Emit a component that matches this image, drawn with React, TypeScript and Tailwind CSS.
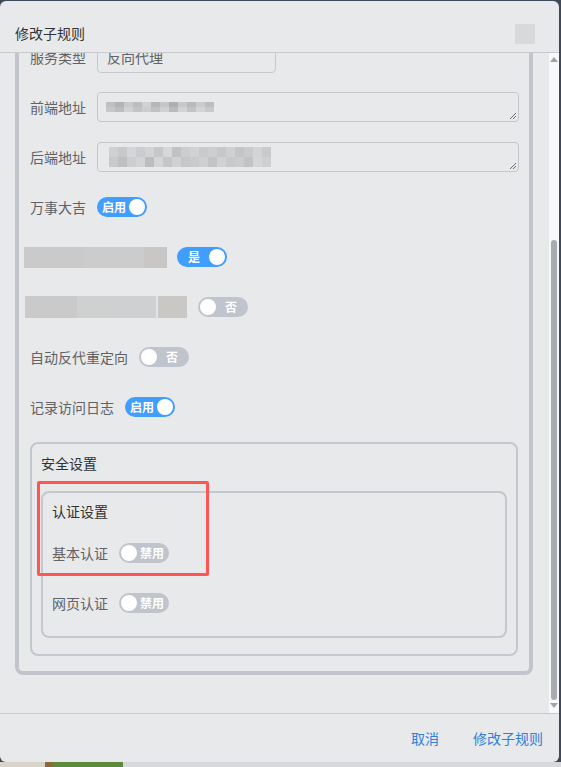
import clsx from 'clsx';

const pixels1 = ['#bfc0c2', '#b3b4b6', '#c9cacc', '#bcbdbf', '#d0d1d3', '#b6b7b9', '#c4c5c7', '#aeafb1', '#c7c8ca', '#b9babc', '#cbcccd', '#bdbebf'];
const pixels1b = ['#c6c7c9', '#bcbdbf', '#d1d2d4', '#c3c4c6', '#cccdcf', '#c0c1c3', '#cfd0d2', '#babbbd', '#d2d3d5', '#c2c3c5', '#d3d4d6', '#c8c9cb'];
const pixels2 = ['#cfd0d2', '#c8c9cb', '#d5d6d8', '#cbcccf', '#d2d3d5', '#c6c7c9', '#d6d7d8', '#c1c2c4', '#cccdcf', '#d1d2d4', '#c9cacc', '#cdcecf', '#c7c8ca', '#d0d1d2', '#c4c5c7', '#cacbcd', '#d3d4d5', '#c9cacb'];
const pixels2b = ['#c9cacc', '#bfc0c2', '#cdced0', '#d3d4d6', '#bcbdbf', '#d4d5d7', '#c5c6c8', '#d0d1d3', '#c6c7c9', '#c9cacc', '#cecfd1', '#c3c4c6', '#d1d2d4', '#c8c9cb', '#cbcccd', '#c2c3c5', '#d5d6d7', '#cfd0d1'];

function Switch({ on, text }: { on: boolean; text: string }) {
  return (
    <span
      className={clsx(
        'inline-flex h-[20px] w-[50px] shrink-0 items-center rounded-full p-[2px]',
        on ? 'flex-row bg-[#409eff]' : 'flex-row-reverse bg-[#c0c4cc]'
      )}
    >
      <span className="flex-1 text-center text-[12px] font-bold leading-none text-white">{text}</span>
      <span className="h-[16px] w-[16px] rounded-full bg-white" />
    </span>
  );
}

function Row({ label, children }: { label: string; children: React.ReactNode }) {
  return (
    <div className="flex h-[50px] items-center gap-[11px]">
      <span className="shrink-0 whitespace-nowrap text-[14px] text-[#606266]">{label}</span>
      {children}
    </div>
  );
}

function ResizeHandle() {
  return (
    <svg className="absolute bottom-[1px] right-[1px]" width="8" height="8" viewBox="0 0 8 8">
      <path d="M7 1L1 7M7 4L4 7" stroke="#6b6e73" strokeWidth="1" />
    </svg>
  );
}

function Pixels({ top, bottom, cell, h }: { top: string[]; bottom: string[]; cell: string; h: string }) {
  return (
    <div className="flex flex-col">
      <div className="flex">
        {top.map((c, i) => (
          <span key={i} className={clsx(cell, h)} style={{ backgroundColor: c }} />
        ))}
      </div>
      <div className="flex">
        {bottom.map((c, i) => (
          <span key={i} className={clsx(cell, h)} style={{ backgroundColor: c }} />
        ))}
      </div>
    </div>
  );
}

export default function App() {
  return (
    <div className="relative h-[767px] w-[561px] overflow-hidden bg-[#3e4a5a] font-['Noto_Sans_CJK_SC','Noto_Sans',sans-serif]">
      <div className="mt-px flex h-[761px] w-[559px] flex-col overflow-hidden rounded-[6px] bg-[#e8e9ea]">
        {/* Header */}
        <div className="flex h-[52px] shrink-0 items-center justify-between border-b border-[#c9cacd] pl-[15px] pr-[24px] pt-[14px]">
          <span className="text-[14px] text-[#333]">修改子规则</span>
          <span className="h-[20px] w-[20px] bg-[#d8dad9]" />
        </div>

        {/* Body */}
        <div className="flex h-[660px] shrink-0">
          <div className="flex-1 overflow-hidden">
            <div className="-mt-[35px] ml-[15px] w-[518px] rounded-[8px] border-4 border-[#c1c4cb] pb-[15px] pl-[11px] pr-[10px] pt-[10px]">
              <Row label="服务类型">
                <div className="flex h-[32px] w-[179px] items-center rounded-[4px] border border-[#c5c7cc] px-[9px] text-[14px] text-[#606266]">
                  反向代理
                </div>
              </Row>
              <Row label="前端地址">
                <div className="relative flex h-[30px] w-[422px] shrink-0 items-center rounded-[4px] border border-[#c5c7cc] pl-[8px]">
                  <Pixels top={pixels1} bottom={pixels1b} cell="w-[9px]" h="h-[5px]" />
                  <ResizeHandle />
                </div>
              </Row>
              <Row label="后端地址">
                <div className="relative flex h-[30px] w-[422px] shrink-0 items-center rounded-[4px] border border-[#c5c7cc] pl-[11px]">
                  <Pixels top={pixels2} bottom={pixels2b} cell="w-[9px]" h="h-[10px]" />
                  <ResizeHandle />
                </div>
              </Row>
              <Row label="万事大吉">
                <Switch on text="启用" />
              </Row>
              <div className="-ml-[6px] flex h-[50px] items-center gap-[10px]">
                <div className="flex h-[21px] w-[143px]">
                  <span className="w-[60px] bg-[#cacaca]" />
                  <span className="w-[60px] bg-[#cccccd]" />
                  <span className="flex-1 bg-[#c8c7c5]" />
                </div>
                <Switch on text="是" />
              </div>
              <div className="-ml-[5px] flex h-[50px] items-center gap-[11px]">
                <div className="flex h-[22px] w-[162px]">
                  <span className="w-[52px] bg-[#c9cac9]" />
                  <span className="w-[37px] bg-[#cfd0d0]" />
                  <span className="w-[42px] bg-[#cfd0d2]" />
                  <span className="w-[2px] bg-[#e2e3e4]" />
                  <span className="flex-1 bg-[#c9c8c5]" />
                </div>
                <Switch on={false} text="否" />
              </div>
              <Row label="自动反代重定向">
                <Switch on={false} text="否" />
              </Row>
              <Row label="记录访问日志">
                <Switch on text="启用" />
              </Row>

              {/* 安全设置 */}
              <div className="mr-[1px] mt-[10px] rounded-[8px] border-2 border-[#c4c7ce] px-[9px] pb-[16px] pt-[9px]">
                <div className="text-[14px] leading-[20px] text-[#303133]">安全设置</div>
                <div className="mt-[18px] rounded-[8px] border-2 border-[#c4c7ce] px-[9px] pb-[8px] pt-[8px]">
                  <div className="text-[14px] leading-[20px] text-[#303133]">认证设置</div>
                  <div className="mt-[7px]">
                    <Row label="基本认证">
                      <Switch on={false} text="禁用" />
                    </Row>
                    <Row label="网页认证">
                      <Switch on={false} text="禁用" />
                    </Row>
                  </div>
                </div>
              </div>
            </div>
          </div>

          {/* Scrollbar */}
          <div className="flex w-[10px] flex-col items-center bg-[#f7f8fa]">
            <svg className="mt-[4px]" width="8" height="5" viewBox="0 0 8 5">
              <path d="M4 0L8 5H0Z" fill="#a0a3a8" />
            </svg>
            <div className="flex-1" />
            <div className="h-[460px] w-[6px] rounded-full bg-[#a8abb2]" />
            <svg className="mb-[5px] mt-[3px]" width="8" height="5" viewBox="0 0 8 5">
              <path d="M0 0H8L4 5Z" fill="#a0a3a8" />
            </svg>
          </div>
        </div>

        {/* Footer */}
        <div className="flex flex-1 items-center justify-end gap-[34px] border-t border-[#c9cacd] pr-[16px]">
          <span className="text-[14px] text-[#2f80d8]">取消</span>
          <span className="text-[14px] text-[#2f80d8]">修改子规则</span>
        </div>
      </div>

      {/* Page behind the dialog */}
      <div className="flex h-[5px]">
        <span className="w-[45px] bg-[#d8d4c8]" />
        <span className="w-[8px] bg-[#8a6a3a]" />
        <span className="w-[70px] bg-[#5a8a3a]" />
        <span className="flex-1 bg-[#d6d8dc]" />
      </div>

      {/* Annotation */}
      <div className="absolute left-[37px] top-[481px] h-[95px] w-[172px] rounded-[2px] border-[3px] border-[#ff5555]" />
    </div>
  );
}
